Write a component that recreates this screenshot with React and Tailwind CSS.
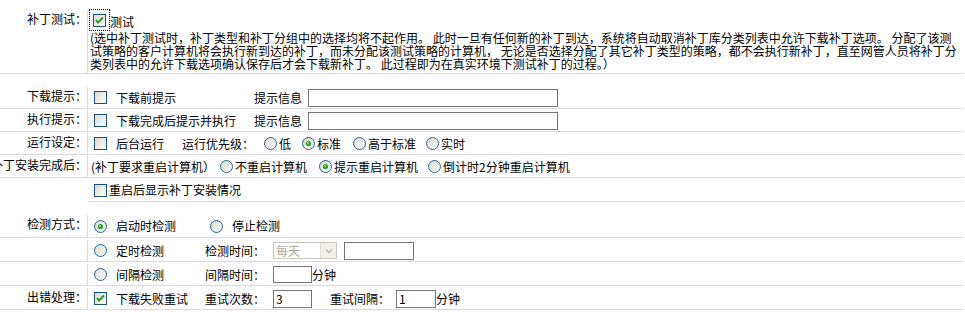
import React from "react";

const Check = ({ checked }) => (
  <svg width="13" height="13" viewBox="0 0 13 13" className="shrink-0 block">
    <defs>
      <linearGradient id="cbg" x1="0" y1="0" x2="1" y2="1">
        <stop offset="0" stopColor="#d8d8d2" />
        <stop offset="1" stopColor="#ffffff" />
      </linearGradient>
    </defs>
    <rect x="0.5" y="0.5" width="12" height="12" fill="url(#cbg)" stroke="#1c5180" />
    {checked && (
      <path d="M3 6 L5 8.5 L10 3.5" fill="none" stroke="#21a121" strokeWidth="2" />
    )}
  </svg>
);

const Radio = ({ checked }) => (
  <svg width="13" height="13" viewBox="0 0 13 13" className="shrink-0 block">
    <defs>
      <linearGradient id="rbg" x1="0" y1="0" x2="1" y2="1">
        <stop offset="0" stopColor="#d6d6d0" />
        <stop offset="1" stopColor="#ffffff" />
      </linearGradient>
    </defs>
    <circle cx="6.5" cy="6.5" r="6" fill="url(#rbg)" stroke="#2f5f8f" />
    {checked && (
      <>
        <circle cx="6.5" cy="6.5" r="2.6" fill="#24a424" />
        <circle cx="6" cy="6" r="1" fill="#8fe08f" />
      </>
    )}
  </svg>
);

const Box = ({ className, children }) => (
  <span
    className={
      "flex items-center shrink-0 border border-[#777777] bg-white pl-[2px] leading-none " +
      className
    }
  >
    {children}
  </span>
);

const Row = ({ label, h, children, noLabelBorder, className = "" }) => (
  <div className={"flex " + className}>
    <div
      className={
        "w-[88px] shrink-0 flex justify-end whitespace-nowrap pt-[2px] " +
        (noLabelBorder ? "" : "border-r border-b border-[#dadada]")
      }
      style={{ height: h }}
    >
      <span>{label}</span>
    </div>
    <div
      className="flex-1 ml-[1px] mr-[2px] border-b border-[#dadada] pl-[1px] flex items-center whitespace-nowrap"
      style={{ height: h }}
    >
      {children}
    </div>
  </div>
);

const L1 = "(选中补丁测试时，补丁类型和补丁分组中的选择均将不起作用。 此时一旦有任何新的补丁到达，系统将自动取消补丁库分类列表中允许下载补丁选项。 分配了该测";
const L2 = "试策略的客户计算机将会执行新到达的补丁，而未分配该测试策略的计算机， 无论是否选择分配了其它补丁类型的策略，都不会执行新补丁，直至网管人员将补丁分";
const L3 = "类列表中的允许下载选项确认保存后才会下载新补丁。 此过程即为在真实环境下测试补丁的过程。）";

export default function App() {
  return (
    <div className="w-[965px] h-[325px] overflow-hidden bg-white text-black text-[12px] leading-[14px] font-['Noto_Sans_CJK_SC','Noto_Sans_CJK_JP',sans-serif] pt-[10px]">
      {/* Row 1 */}
      <div className="flex">
        <div className="w-[88px] shrink-0 flex justify-end whitespace-nowrap pt-[2px] border-r border-b border-[#dadada] h-[64px]">
          <span>补丁测试：</span>
        </div>
        <div className="flex-1 ml-[1px] mr-[2px] border-b border-[#dadada] h-[64px] whitespace-nowrap">
          <div className="flex items-end h-[21px]">
            <span className="w-[21px] h-[22px] border border-dotted border-black flex items-end pl-[3px] pb-[3px] shrink-0">
              <Check checked />
            </span>
            <span className="pb-[2px]">测试</span>
          </div>
          <div className="leading-[13px] pl-[1px]">
            <div>{L1}</div>
            <div>{L2}</div>
            <div>{L3}</div>
          </div>
        </div>
      </div>

      <div className="flex flex-col gap-[1px] mt-[13px]">
        <Row label="下载提示：" h={22}>
          <div className="flex items-center w-[164px]">
            <span className="ml-[4px] mr-[9px]">
              <Check />
            </span>
            <span>下载前提示</span>
          </div>
          <span className="w-[54px]">提示信息</span>
          <Box className="w-[250px] h-[18px]" />
        </Row>
        <Row label="执行提示：" h={22}>
          <div className="flex items-center w-[164px]">
            <span className="ml-[4px] mr-[9px]">
              <Check />
            </span>
            <span>下载完成后提示并执行</span>
          </div>
          <span className="w-[54px]">提示信息</span>
          <Box className="w-[250px] h-[18px]" />
        </Row>
        <Row label="运行设定：" h={22}>
          <div className="flex items-center w-[92px]">
            <span className="ml-[4px] mr-[9px]">
              <Check />
            </span>
            <span>后台运行</span>
          </div>
          <span className="w-[82px]">运行优先级：</span>
          <span className="flex items-center mr-[11px]">
            <Radio />
            <span className="ml-[2px]">低</span>
          </span>
          <span className="flex items-center mr-[12px]">
            <Radio checked />
            <span className="ml-[2px]">标准</span>
          </span>
          <span className="flex items-center mr-[10px]">
            <Radio />
            <span className="ml-[2px]">高于标准</span>
          </span>
          <span className="flex items-center">
            <Radio />
            <span className="ml-[2px]">实时</span>
          </span>
        </Row>
        <Row label="补丁安装完成后：" h={22}>
          <span className="w-[130px] pl-[1px]">(补丁要求重启计算机）</span>
          <span className="flex items-center mr-[12px]">
            <Radio />
            <span className="ml-[2px]">不重启计算机</span>
          </span>
          <span className="flex items-center mr-[10px]">
            <Radio checked />
            <span className="ml-[2px]">提示重启计算机</span>
          </span>
          <span className="flex items-center">
            <Radio />
            <span className="ml-[2px]">倒计时2分钟重启计算机</span>
          </span>
        </Row>
        <Row label="" h={23} noLabelBorder>
          <span className="ml-[4px] mr-[2px]">
            <Check />
          </span>
          <span>重启后显示补丁安装情况</span>
        </Row>
      </div>

      <div className="flex flex-col gap-[2px] mt-[13px]">
        <Row label="检测方式：" h={23}>
          <div className="flex items-center w-[120px]">
            <span className="ml-[4px] mr-[9px]">
              <Radio checked />
            </span>
            <span>启动时检测</span>
          </div>
          <span className="mr-[9px]">
            <Radio />
          </span>
          <span>停止检测</span>
        </Row>
        <Row label="" h={22}>
          <div className="flex items-center w-[115px]">
            <span className="ml-[4px] mr-[9px]">
              <Radio />
            </span>
            <span>定时检测</span>
          </div>
          <span className="w-[68px]">检测时间：</span>
          <span className="flex w-[64px] h-[17px] border border-[#c9c7ba] bg-white shrink-0">
            <span className="flex-1 flex items-center pl-[2px] text-[#aca899] leading-none">每天</span>
            <span className="w-[16px] h-full bg-[#f1efe8] border-l border-[#e0ddd3] flex items-center justify-center">
              <svg width="8" height="6" viewBox="0 0 8 6">
                <path d="M1 1.5 L4 4.5 L7 1.5" fill="none" stroke="#c2c0b4" strokeWidth="1.6" />
              </svg>
            </span>
          </span>
          <Box className="w-[70px] h-[18px] ml-[7px]" />
        </Row>
        <Row label="" h={22}>
          <div className="flex items-center w-[115px]">
            <span className="ml-[4px] mr-[9px]">
              <Radio />
            </span>
            <span>间隔检测</span>
          </div>
          <span className="w-[68px]">间隔时间：</span>
          <Box className="w-[39px] h-[17px]" />
          <span>分钟</span>
        </Row>
        <Row label="出错处理：" h={22}>
          <div className="flex items-center w-[115px]">
            <span className="ml-[4px] mr-[9px]">
              <Check checked />
            </span>
            <span>下载失败重试</span>
          </div>
          <span className="w-[68px]">重试次数：</span>
          <Box className="w-[39px] h-[18px]">3</Box>
          <span className="ml-[18px] w-[66px]">重试间隔：</span>
          <Box className="w-[40px] h-[18px]">1</Box>
          <span>分钟</span>
        </Row>
      </div>
    </div>
  );
}
